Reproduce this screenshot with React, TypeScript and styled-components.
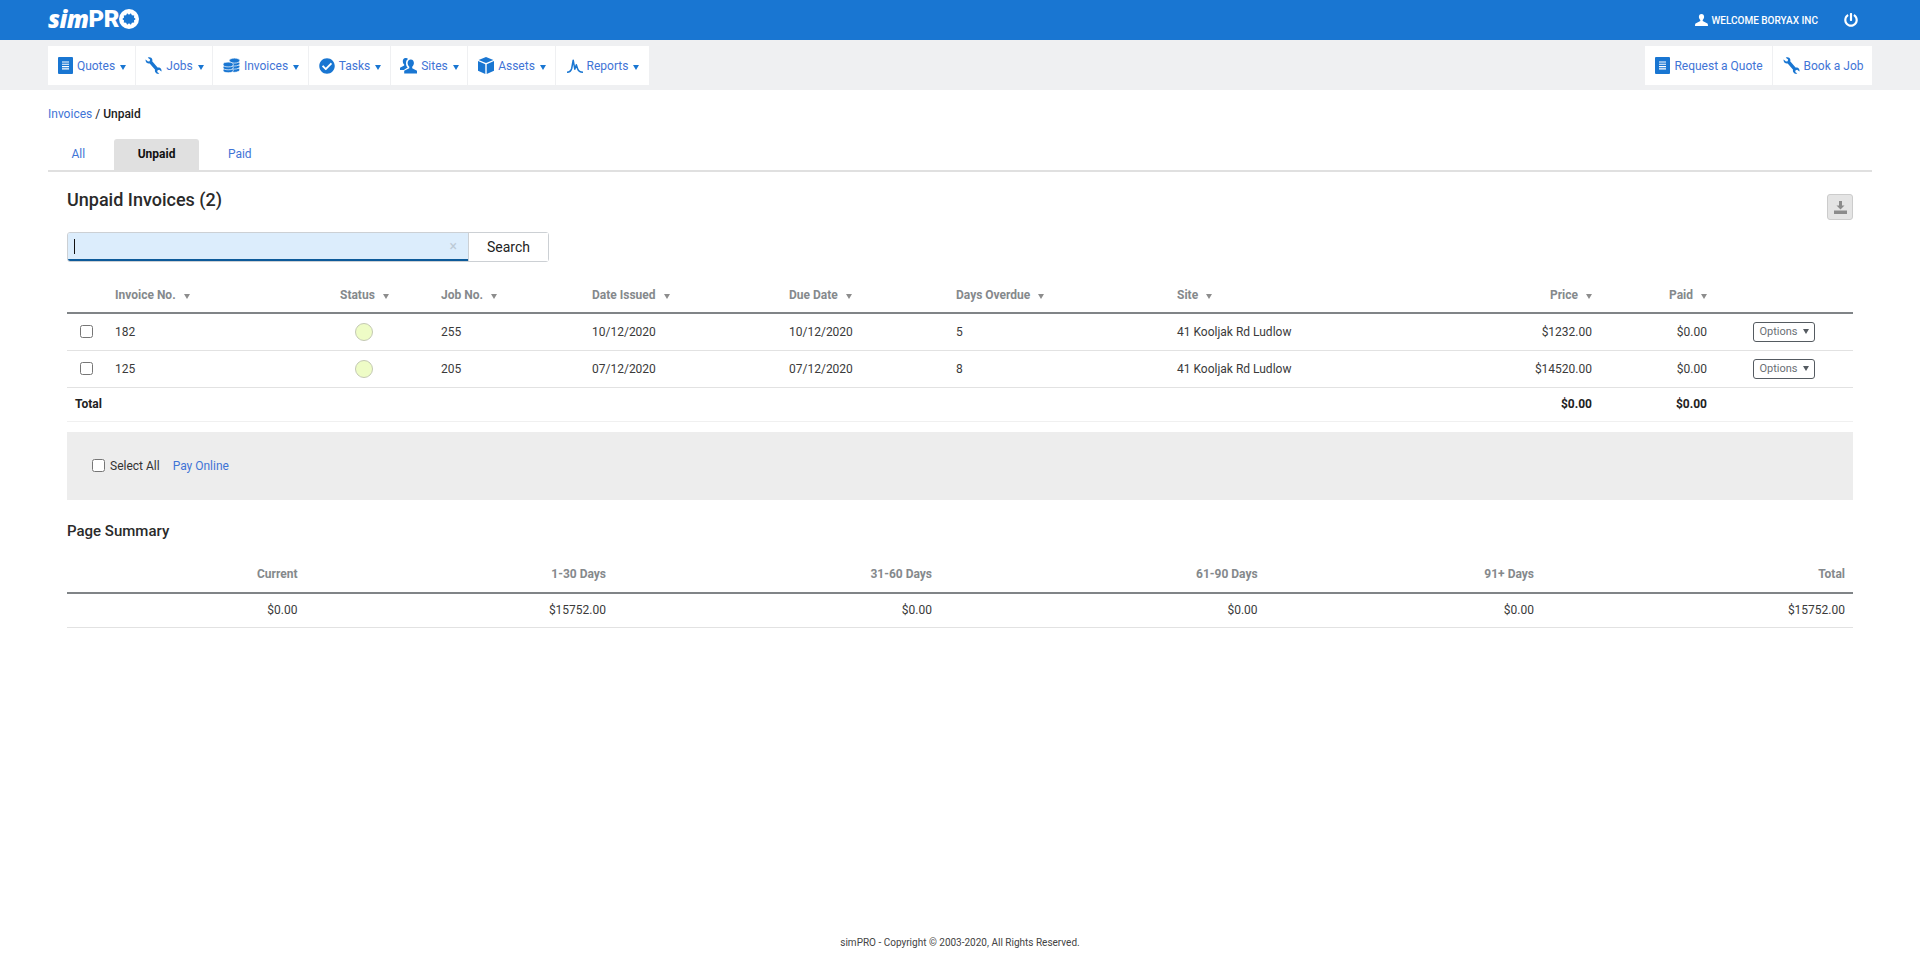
import styled, { createGlobalStyle } from "styled-components";
import { FaCheckCircle, FaPowerOff } from "react-icons/fa";

const GlobalStyle = createGlobalStyle`
  html, body {
    margin: 0;
    padding: 0;
    background: #fff;
    font-family: Roboto, "Liberation Sans", sans-serif;
    font-size: 12px;
    color: #333;
  }
`;

const PageWrap = styled.div`
  min-height: 969px;
  display: flex;
  flex-direction: column;
`;

const TopBar = styled.header`
  height: 40px;
  background: #1976d2;
  display: flex;
  align-items: center;
  justify-content: space-between;
  padding: 0 48px;
`;

const Logo = styled.div`
  display: flex;
  align-items: center;
  color: #fff;
  font-family: "Open Sans", sans-serif;
  font-weight: 800;
  font-size: 24px;
  line-height: 1;
  letter-spacing: -0.5px;
  margin-top: -3px;
`;

const LogoSim = styled.i`
  font-weight: 800;
`;

const LogoPro = styled.span`
  font-family: Roboto, sans-serif;
  font-weight: 900;
  font-size: 24px;
  letter-spacing: -0.4px;
`;

const UserArea = styled.div`
  display: flex;
  align-items: center;
  color: #fff;
  font-size: 10px;
  font-weight: 500;
  padding-right: 14px;
`;

const WelcomeText = styled.span`
  margin-left: 3px;
  margin-right: 26px;
`;

const NavBar = styled.nav`
  height: 50px;
  box-sizing: border-box;
  background: #eff0f2;
  padding: 6px 48px 5px;
  display: flex;
  justify-content: space-between;
`;

const NavGroup = styled.ul`
  display: flex;
  margin: 0;
  padding: 0;
  list-style: none;
  background: #fff;
`;

const NavItem = styled.li<{ $w: number }>`
  width: ${(p) => p.$w}px;
  box-sizing: border-box;
  display: flex;
  align-items: center;
  justify-content: center;
  gap: 4px;
  padding-left: 1px;
  color: #3f74d6;
  font-size: 12px;
  white-space: nowrap;
  border-right: 1px solid #eff0f2;
  &:last-child {
    border-right: 0;
  }
`;

const Caret = styled.span`
  display: inline-block;
  width: 0;
  height: 0;
  margin-left: 1px;
  margin-top: 3px;
  border-left: 3.5px solid transparent;
  border-right: 3.5px solid transparent;
  border-top: 5px solid #1976d2;
`;

const Content = styled.main`
  flex: 1;
  padding: 0 48px;
`;

const Crumbs = styled.div`
  height: 49px;
  line-height: 48px;
  font-size: 12px;
  color: #222;
`;

const CrumbCurrent = styled.span`
  font-weight: 500;
`;

const BlueLink = styled.a`
  color: #3f74d6;
  text-decoration: none;
`;

const Tabs = styled.div`
  display: flex;
  height: 33px;
  box-sizing: border-box;
  border-bottom: 2px solid #e0e0e0;
`;

const Tab = styled.div<{ $active?: boolean }>`
  height: 31px;
  line-height: 31px;
  padding: 0 23.5px;
  margin-right: 5.5px;
  border-radius: 3px 3px 0 0;
  font-size: 12px;
  font-weight: ${(p) => (p.$active ? 700 : 400)};
  color: ${(p) => (p.$active ? "#111" : "#3f74d6")};
  background: ${(p) => (p.$active ? "#e0e0e0" : "transparent")};
`;

const Section = styled.section`
  padding: 0 19px;
`;

const TitleRow = styled.div`
  display: flex;
  justify-content: space-between;
  align-items: flex-start;
  height: 60px;
`;

const Title = styled.h1`
  margin: 16px 0 0;
  font-size: 18px;
  line-height: 24px;
  font-weight: 500;
  color: #2a2a2a;
`;

const ExportButton = styled.button`
  width: 26px;
  height: 26px;
  margin-top: 22px;
  padding: 0;
  border: 1px solid #ccc;
  border-radius: 3px;
  background: #e4e4e4;
  display: flex;
  align-items: center;
  justify-content: center;
`;

const SearchForm = styled.div`
  display: flex;
  width: 482px;
  height: 30px;
  box-sizing: border-box;
  border: 1px solid #ccd0d4;
  border-radius: 3px;
`;

const SearchField = styled.div`
  position: relative;
  width: 400px;
  background: #dcedfc;
  border-bottom: 2px solid #0d5a99;
  border-radius: 2px 0 0 2px;
  display: flex;
  align-items: center;
`;

const Cursor = styled.span`
  width: 1px;
  height: 15px;
  margin-left: 6px;
  background: #111;
`;

const ClearMark = styled.span`
  position: absolute;
  right: 11px;
  top: 5px;
  font-size: 14px;
  color: #bccad6;
`;

const SearchButton = styled.button`
  flex: 1;
  padding: 0;
  border: 0;
  border-left: 1px solid #ccd0d4;
  background: #fff;
  font: 14px Roboto, sans-serif;
  color: #222;
`;

const Table = styled.table`
  width: 100%;
  table-layout: fixed;
  border-collapse: collapse;
`;

const Col = styled.col<{ $w: number }>`
  width: ${(p) => p.$w}px;
`;

const Th = styled.th<{ $right?: boolean }>`
  height: 51px;
  padding: 16px 8px 0;
  box-sizing: border-box;
  border-bottom: 2px solid #808487;
  text-align: ${(p) => (p.$right ? "right" : "left")};
  font-size: 12px;
  font-weight: 700;
  color: #85898c;
`;

const SummaryTh = styled(Th)`
  padding-top: 15px;
`;

const SortMark = styled.span`
  display: inline-block;
  width: 0;
  height: 0;
  margin-left: 8px;
  border-left: 3px solid transparent;
  border-right: 3px solid transparent;
  border-top: 5px solid #8d8d8d;
`;

const Td = styled.td<{ $right?: boolean; $center?: boolean }>`
  height: 37px;
  padding: 0 8px;
  box-sizing: border-box;
  border-bottom: 1px solid #e2e2e2;
  text-align: ${(p) => (p.$right ? "right" : p.$center ? "center" : "left")};
  font-size: 12px;
  color: #3a3a3a;
`;

const TotalTd = styled(Td)`
  height: 34px;
  font-weight: 700;
  color: #222;
  border-bottom-color: #f0f0f0;
`;

const Check = styled.input.attrs({ type: "checkbox" })`
  display: block;
  width: 13px;
  height: 13px;
  margin: 0 0 0 5px;
`;

const StatusDot = styled.span`
  display: block;
  width: 18px;
  height: 18px;
  margin-left: 15px;
  box-sizing: border-box;
  border: 1px solid #c4c9b4;
  border-radius: 50%;
  background: #eefcc6;
`;

const OptionsButton = styled.button`
  display: block;
  width: 62px;
  height: 20px;
  margin: 0 auto;
  padding: 0;
  border: 1px solid #555b61;
  border-radius: 3px;
  background: #fff;
  font: 11px Roboto, sans-serif;
  color: #6a6f75;
`;

const OptionsCaret = styled.span`
  display: inline-block;
  width: 0;
  height: 0;
  margin-left: 5px;
  margin-bottom: 1px;
  border-left: 3.5px solid transparent;
  border-right: 3.5px solid transparent;
  border-top: 5px solid #555b61;
`;

const ActionPanel = styled.div`
  height: 68px;
  margin-top: 10px;
  padding-left: 25px;
  background: #ededed;
  display: flex;
  align-items: center;
  font-size: 12px;
  color: #333;
`;

const PanelCheck = styled.input.attrs({ type: "checkbox" })`
  width: 13px;
  height: 13px;
  margin: 0 5px 0 0;
`;

const PanelLink = styled(BlueLink)`
  margin-left: 13px;
`;

const SummaryTitle = styled.h2`
  margin: 21px 0 0;
  font-size: 15px;
  line-height: 21px;
  font-weight: 500;
  color: #2a2a2a;
`;

const SummaryTd = styled(Td)`
  height: 35px;
`;

const Footer = styled.footer`
  height: 32px;
  text-align: center;
  font-size: 10px;
  color: #444;
`;

const DocIcon = () => (
  <svg width="15" height="17" viewBox="0 0 15 17">
    <rect width="15" height="17" rx="1" fill="#1976d2" />
    <path d="M4 5h7M4 7.3h7M4 9.6h7M4 11.9h7" stroke="#fff" strokeWidth="1.1" />
  </svg>
);

const WrenchIcon = () => (
  <svg width="17" height="17" viewBox="0 0 17 17">
    <path
      d="M.6 2.6 3 4.600l1.700-.3.4-1.800L2.800.7C4.600-.3 6.800.6 7.300 2.400c.2.700.1 1.400-.1 1.900l5.400 6.200c.7-.2 1.500-.1 2.200.3 1.400.8 2 2.400 1.600 3.700l-2.200-1.700-1.600.4-.4 1.700 2.100 1.700c-1.700.6-3.600-.1-4.200-1.800-.3-.7-.3-1.400 0-2.100L4.700 6.400c-.9.3-1.900.2-2.700-.3C1.100 5.500.4 4 .6 2.600z"
      fill="#1976d2"
    />
  </svg>
);

const CoinsIcon = () => (
  <svg width="17" height="15" viewBox="0 0 17 15">
    <g fill="#1976d2" stroke="#fff" strokeWidth="0.7">
      <ellipse cx="11.500" cy="11.800" rx="5.300" ry="2.500" />
      <ellipse cx="11.500" cy="8.600" rx="5.300" ry="2.500" />
      <ellipse cx="11.500" cy="5.500" rx="5.300" ry="2.500" />
      <ellipse cx="11.500" cy="2.600" rx="5.300" ry="2.500" />
      <ellipse cx="5.200" cy="12.300" rx="5.100" ry="2.400" />
      <ellipse cx="5.200" cy="9.400" rx="5.100" ry="2.400" />
      <ellipse cx="5.200" cy="6.500" rx="5.100" ry="2.400" />
    </g>
  </svg>
);

const PeopleIcon = () => (
  <svg width="17" height="16" viewBox="0 0 17 16">
    <g fill="#1976d2">
      <path d="M5.500 0C3.700 0 2.800 1.400 2.800 3.200c0 1.400.6 2.600 1.400 3.300v1L0 9.700V12h3.800l3-2 .9-.5C6.600 8.700 6 7 6 5c0-1.800.8-3.300 2-4C7.500.4 6.600 0 5.500 0z" />
      <path d="M10.800 1.500c-2 0-3.200 1.600-3.200 3.600 0 1.500.7 2.900 1.700 3.700v1.400L4.200 12.800V15.500H17v-2.700l-4.800-2.600V8.800c1-.8 1.700-2.200 1.700-3.700 0-2-1.100-3.600-3.100-3.600z" />
    </g>
  </svg>
);

const CubeIcon = () => (
  <svg width="16" height="17" viewBox="0 0 16 17">
    <g fill="#1976d2">
      <path d="M8 0 15.400 3 8 6.100.6 3z" />
      <path d="M0 4.100 7.300 7.200V17L0 13.700z" />
      <path d="M16 4.100 8.700 7.200V17l7.300-3.300z" />
    </g>
  </svg>
);

const SpikeIcon = () => (
  <svg width="16" height="14" viewBox="0 0 16 14">
    <path
      d="M0 13.200c2.800 0 4-.8 4.700-3.700L6.200 1.200l1.600 9 1.500-4.400 1.300 4c.8 2.400 2.400 3.400 5.400 3.400"
      fill="none"
      stroke="#1976d2"
      strokeWidth="1.500"
      strokeLinejoin="round"
    />
  </svg>
);

const DownloadIcon = () => (
  <svg width="13" height="13" viewBox="0 0 13 13">
    <g fill="#8b8b8b">
      <path d="M5 0h3v4.500h2.500L6.500 8.500l-4-4H5z" />
      <rect y="9.500" width="13" height="3.500" />
    </g>
  </svg>
);

const PersonIcon = () => (
  <svg width="13" height="12" viewBox="0 0 13 12">
    <path
      d="M6.500 0C4.800 0 3.900 1.200 3.900 2.800c0 1.300.6 2.500 1.400 3.100v1.200L1 9.200C.3 9.600 0 10.200 0 12h13c0-1.800-.3-2.400-1-2.800L7.700 7.100V5.900c.8-.6 1.400-1.800 1.400-3.100C9.100 1.200 8.200 0 6.500 0z"
      fill="#fff"
    />
  </svg>
);

const LogoGear = () => (
  <svg width="20" height="20" viewBox="0 0 21 21">
    <path
      fillRule="evenodd"
      fill="#fff"
      d="M10.500 0a10.500 10.500 0 1 0 0 21 10.500 10.500 0 0 0 0-21zM8.500 4.500l2 1.500 2-1.500 1 2 2.500.2-.3 2.300 1.800 1.500-1.800 1.500.3 2.300-2.500.2-1 2-2-1.500-2 1.500-1-2-2.500-.2.3-2.300L3.500 10.500 5.300 9 5 6.700l2.500-.2z"
    />
  </svg>
);

const navItems = [
  { label: "Quotes", icon: <DocIcon />, w: 88 },
  { label: "Jobs", icon: <WrenchIcon />, w: 77 },
  { label: "Invoices", icon: <CoinsIcon />, w: 96 },
  { label: "Tasks", icon: <FaCheckCircle size={16} color="#1976d2" />, w: 82 },
  { label: "Sites", icon: <PeopleIcon />, w: 77 },
  { label: "Assets", icon: <CubeIcon />, w: 88 },
  { label: "Reports", icon: <SpikeIcon />, w: 93 },
];

const invoices = [
  { no: "182", job: "255", issued: "10/12/2020", due: "10/12/2020", days: "5", site: "41 Kooljak Rd Ludlow", price: "$1232.00" },
  { no: "125", job: "205", issued: "07/12/2020", due: "07/12/2020", days: "8", site: "41 Kooljak Rd Ludlow", price: "$14520.00" },
];

const mainCols = [40, 225, 101, 151, 197, 167, 221, 281, 150, 115, 138];
const summaryCols = [238.5, 308.5, 326, 325.6, 276.4, 311];
const summaryHeads = ["Current", "1-30 Days", "31-60 Days", "61-90 Days", "91+ Days", "Total"];
const summaryVals = ["$0.00", "$15752.00", "$0.00", "$0.00", "$0.00", "$15752.00"];

export default function App() {
  return (
    <PageWrap>
      <GlobalStyle />
      <TopBar>
        <Logo>
          <LogoSim>sim</LogoSim>
          <LogoPro>PR</LogoPro>
          <LogoGear />
        </Logo>
        <UserArea>
          <PersonIcon />
          <WelcomeText>WELCOME BORYAX INC</WelcomeText>
          <FaPowerOff size={14} />
        </UserArea>
      </TopBar>
      <NavBar>
        <NavGroup>
          {navItems.map((item) => (
            <NavItem key={item.label} $w={item.w}>
              {item.icon}
              {item.label}
              <Caret />
            </NavItem>
          ))}
        </NavGroup>
        <NavGroup>
          <NavItem $w={128}>
            <DocIcon />
            Request a Quote
          </NavItem>
          <NavItem $w={99}>
            <WrenchIcon />
            Book a Job
          </NavItem>
        </NavGroup>
      </NavBar>
      <Content>
        <Crumbs>
          <BlueLink>Invoices</BlueLink> / <CrumbCurrent>Unpaid</CrumbCurrent>
        </Crumbs>
        <Tabs>
          <Tab>All</Tab>
          <Tab $active>Unpaid</Tab>
          <Tab>Paid</Tab>
        </Tabs>
        <Section>
          <TitleRow>
            <Title>Unpaid Invoices (2)</Title>
            <ExportButton>
              <DownloadIcon />
            </ExportButton>
          </TitleRow>
          <SearchForm>
            <SearchField>
              <Cursor />
              <ClearMark>×</ClearMark>
            </SearchField>
            <SearchButton>Search</SearchButton>
          </SearchForm>
          <Table>
            <colgroup>
              {mainCols.map((w, i) => (
                <Col key={i} $w={w} />
              ))}
            </colgroup>
            <thead>
              <tr>
                <Th />
                <Th>Invoice No.<SortMark /></Th>
                <Th>Status<SortMark /></Th>
                <Th>Job No.<SortMark /></Th>
                <Th>Date Issued<SortMark /></Th>
                <Th>Due Date<SortMark /></Th>
                <Th>Days Overdue<SortMark /></Th>
                <Th>Site<SortMark /></Th>
                <Th $right>Price<SortMark /></Th>
                <Th $right>Paid<SortMark /></Th>
                <Th />
              </tr>
            </thead>
            <tbody>
              {invoices.map((inv) => (
                <tr key={inv.no}>
                  <Td><Check /></Td>
                  <Td>{inv.no}</Td>
                  <Td><StatusDot /></Td>
                  <Td>{inv.job}</Td>
                  <Td>{inv.issued}</Td>
                  <Td>{inv.due}</Td>
                  <Td>{inv.days}</Td>
                  <Td>{inv.site}</Td>
                  <Td $right>{inv.price}</Td>
                  <Td $right>$0.00</Td>
                  <Td>
                    <OptionsButton>Options<OptionsCaret /></OptionsButton>
                  </Td>
                </tr>
              ))}
              <tr>
                <TotalTd colSpan={8}>Total</TotalTd>
                <TotalTd $right>$0.00</TotalTd>
                <TotalTd $right>$0.00</TotalTd>
                <TotalTd />
              </tr>
            </tbody>
          </Table>
          <ActionPanel>
            <PanelCheck />
            Select All
            <PanelLink>Pay Online</PanelLink>
          </ActionPanel>
          <SummaryTitle>Page Summary</SummaryTitle>
          <Table>
            <colgroup>
              {summaryCols.map((w, i) => (
                <Col key={i} $w={w} />
              ))}
            </colgroup>
            <thead>
              <tr>
                {summaryHeads.map((h) => (
                  <SummaryTh key={h} $right>{h}</SummaryTh>
                ))}
              </tr>
            </thead>
            <tbody>
              <tr>
                {summaryVals.map((v, i) => (
                  <SummaryTd key={i} $right>{v}</SummaryTd>
                ))}
              </tr>
            </tbody>
          </Table>
        </Section>
      </Content>
      <Footer>simPRO - Copyright © 2003-2020, All Rights Reserved.</Footer>
    </PageWrap>
  );
}
